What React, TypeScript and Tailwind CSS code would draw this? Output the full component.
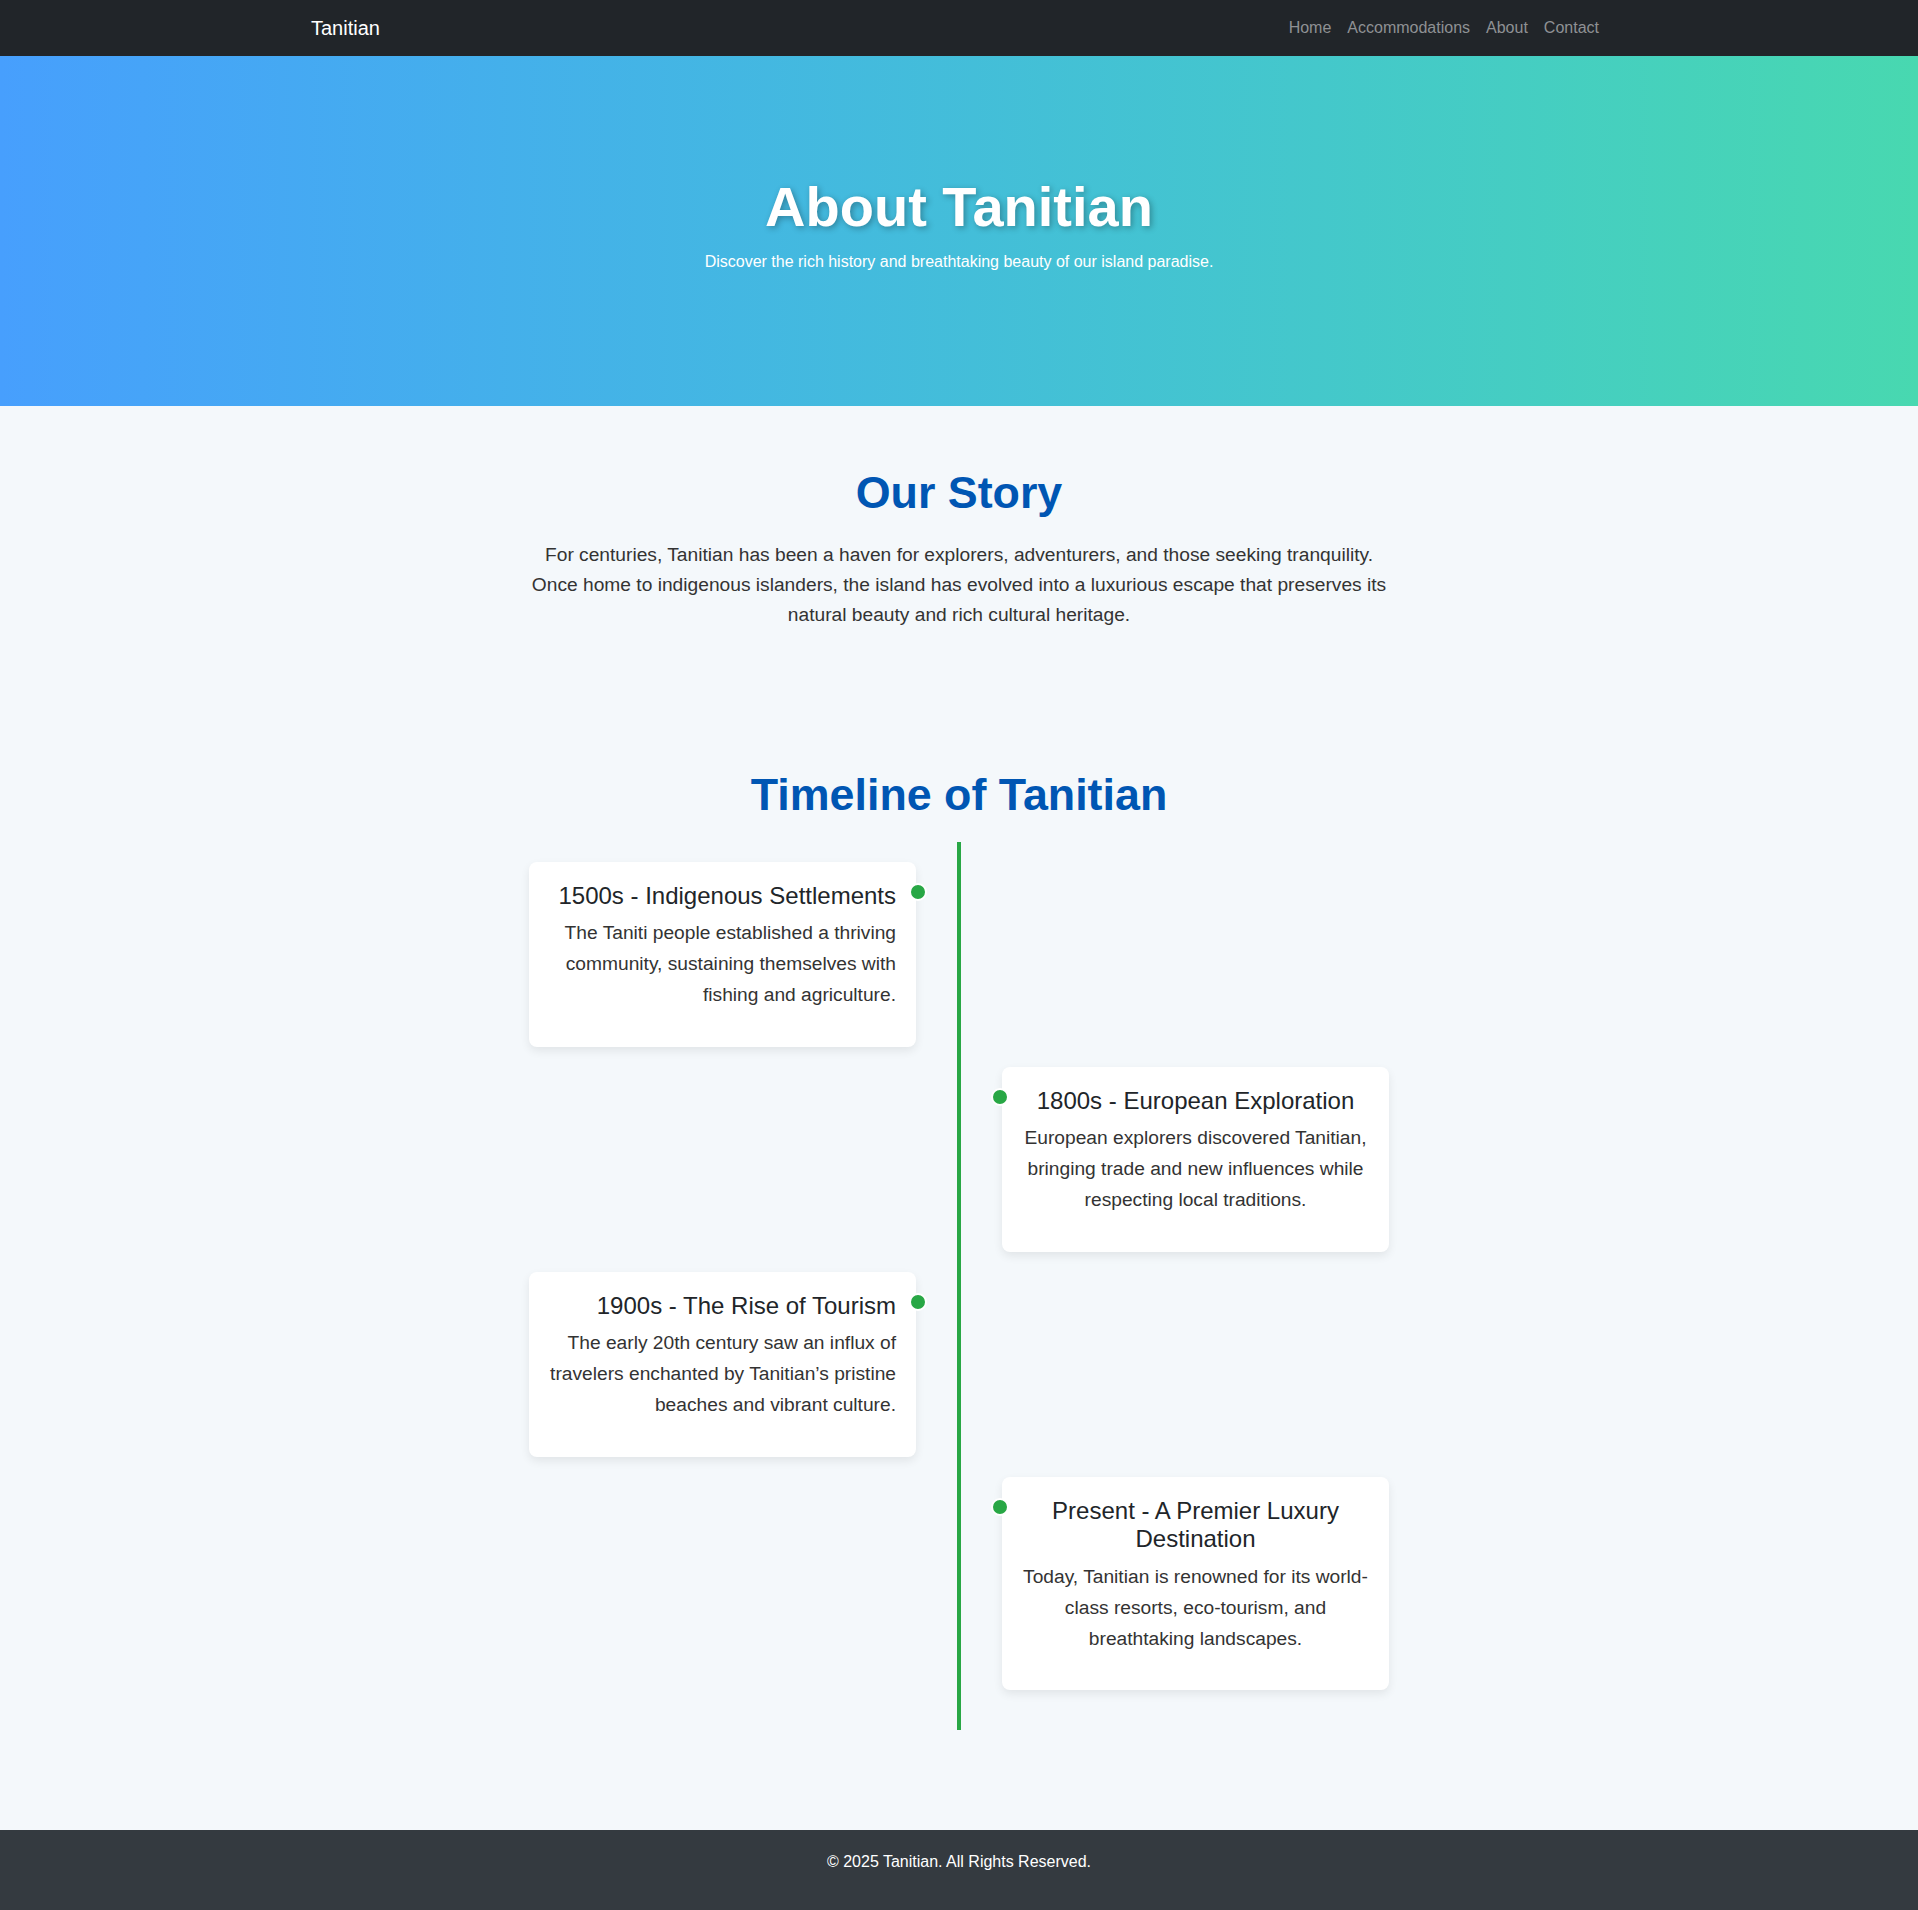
import React from 'react';

type TimelineEvent = {
  title: string;
  text: string;
  side: 'left' | 'right';
};

const events: TimelineEvent[] = [
  {
    title: '1500s - Indigenous Settlements',
    text: 'The Taniti people established a thriving community, sustaining themselves with fishing and agriculture.',
    side: 'left',
  },
  {
    title: '1800s - European Exploration',
    text: 'European explorers discovered Tanitian, bringing trade and new influences while respecting local traditions.',
    side: 'right',
  },
  {
    title: '1900s - The Rise of Tourism',
    text: 'The early 20th century saw an influx of travelers enchanted by Tanitian\u2019s pristine beaches and vibrant culture.',
    side: 'left',
  },
  {
    title: 'Present - A Premier Luxury Destination',
    text: 'Today, Tanitian is renowned for its world-class resorts, eco-tourism, and breathtaking landscapes.',
    side: 'right',
  },
];

const Navbar = () => (
  <nav className="bg-[#212529] h-[56px]">
    <div className="w-[1320px] mx-auto px-3 h-full flex items-center justify-between">
      <a className="text-white text-[20px] leading-[30px]">Tanitian</a>
      <ul className="flex">
        {['Home', 'Accommodations', 'About', 'Contact'].map((link) => (
          <li key={link}>
            <a className="block px-2 py-2 text-[16px] text-[#8f9194]">{link}</a>
          </li>
        ))}
      </ul>
    </div>
  </nav>
);

const TimelineCard = ({ event }: { event: TimelineEvent }) => {
  const isLeft = event.side === 'left';
  return (
    <div className={`flex mb-[20px] ${isLeft ? 'justify-start' : 'justify-end'}`}>
      <div
        className={`relative w-[387px] bg-white rounded-[8px] p-[20px] shadow-[0_4px_10px_rgba(0,0,0,0.08)] ${
          isLeft ? 'text-right' : 'text-center'
        }`}
      >
        <span
          className={`absolute top-[21px] w-[18px] h-[18px] rounded-full bg-[#28a745] border-[2px] border-white ${
            isLeft ? 'right-[-11px]' : 'left-[-11px]'
          }`}
        />
        <h3 className="text-[24px] leading-[1.2] text-[#212529] mb-[8px]">{event.title}</h3>
        <p className="text-[19.2px] leading-[1.6] text-[#333] mb-4">{event.text}</p>
      </div>
    </div>
  );
};

export default function App() {
  return (
    <div className="min-h-screen bg-[#f4f8fb] font-['Liberation_Sans',Arial,sans-serif] text-[#212529]">
      <Navbar />

      {/* Hero */}
      <header className="bg-gradient-to-r from-[#479ffd] to-[#48d8b0] text-white text-center pt-[117px] pb-[116px]">
        <h1 className="text-[56px] font-bold leading-[1.2] mb-[10px] [text-shadow:2px_2px_6px_rgba(0,0,0,0.3)]">
          About Tanitian
        </h1>
        <p className="text-[16px] leading-[24px] mb-4">
          Discover the rich history and breathtaking beauty of our island paradise.
        </p>
      </header>

      {/* Our Story */}
      <section className="py-[60px]">
        <div className="w-[856px] mx-auto text-center">
          <h2 className="text-[44.8px] font-bold leading-[1.2] text-[#0056b3] mb-[20px]">Our Story</h2>
          <p className="text-[19.2px] leading-[30px] text-[#333] mb-4">
            For centuries, Tanitian has been a haven for explorers, adventurers, and those seeking tranquility.
            Once home to indigenous islanders, the island has evolved into a luxurious escape that preserves its
            natural beauty and rich cultural heritage.
          </p>
        </div>
      </section>

      {/* Timeline */}
      <section className="pt-[62px] pb-[60px]">
        <h2 className="text-[44.8px] font-bold leading-[1.2] text-[#0056b3] text-center mb-[20px]">
          Timeline of Tanitian
        </h2>
        <div className="relative w-[860px] mx-auto py-[20px] mb-[40px]">
          <div className="absolute top-0 bottom-0 left-1/2 -ml-[2px] w-[4px] bg-[#28a745]" />
          {events.map((event) => (
            <TimelineCard key={event.title} event={event} />
          ))}
        </div>
      </section>

      {/* Footer */}
      <footer className="bg-[#343a40] text-white text-center pt-[20px] pb-[20px]">
        <p className="text-[16px] leading-[24px] mb-4">&copy; 2025 Tanitian. All Rights Reserved.</p>
      </footer>
    </div>
  );
}
